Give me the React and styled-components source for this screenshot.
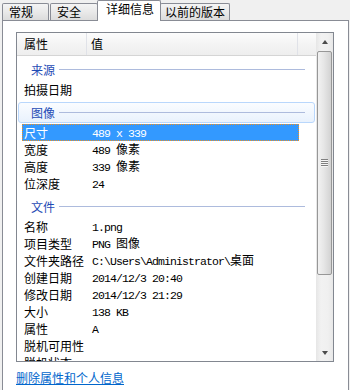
import React from 'react'
import styled, { createGlobalStyle } from 'styled-components'

const GlobalStyle = createGlobalStyle`
  body {
    margin: 0;
    background: #f0f0f0;
    font-family: "Noto Sans CJK SC", "Noto Sans", sans-serif;
    font-size: 12px;
    color: #000;
  }
`

const Window = styled.div`
  width: 350px;
  height: 390px;
  overflow: hidden;
`

const TabStrip = styled.div`
  display: flex;
  align-items: flex-end;
  height: 20px;
  padding-left: 2px;
  position: relative;
  z-index: 1;
`

const Tab = styled.div`
  box-sizing: border-box;
  width: ${p => p.$w}px;
  height: ${p => (p.$active ? 21 : 17)}px;
  margin-left: ${p => p.$ml || 0}px;
  margin-bottom: ${p => (p.$active ? -1 : 0)}px;
  padding-left: ${p => p.$pl || 6}px;
  border: 1px solid #898c95;
  border-bottom: none;
  border-radius: 2px 2px 0 0;
  background: ${p => (p.$active ? '#fff' : 'linear-gradient(#f4f4f4, #e9e9e9 50%, #dcdcdc)')};
  line-height: 16px;
  white-space: nowrap;
  position: relative;
  z-index: ${p => (p.$active ? 2 : 1)};
`

const Panel = styled.div`
  box-sizing: border-box;
  margin-left: 2px;
  width: 347px;
  height: 380px;
  border: 1px solid #898c95;
  border-bottom: none;
  background: #fff;
  padding: 11px 14px 0 13px;
`

const ListBox = styled.div`
  box-sizing: border-box;
  height: 330px;
  border: 1px solid #828790;
  display: flex;
`

const Content = styled.div`
  flex: 1;
  overflow: hidden;
  display: flex;
  flex-direction: column;
`

const Header = styled.div`
  flex: none;
  display: flex;
  height: 22px;
  border-bottom: 1px solid #d5d5d5;
  background: linear-gradient(#fcfcfc, #f4f4f4 50%, #eeeeee);
`

const HeaderCell = styled.div`
  box-sizing: border-box;
  width: ${p => (p.$w ? p.$w + 'px' : 'auto')};
  flex: ${p => (p.$w ? 'none' : '1')};
  padding-left: ${p => p.$pl || 0}px;
  border-right: ${p => (p.$w ? '1px solid #e0e2e8' : 'none')};
  line-height: 22px;
`

const Group = styled.div`
  flex: none;
  padding: ${p => (p.$first ? 3 : 4)}px 1px 1px;
`

const GroupBox = styled.div`
  box-sizing: border-box;
  height: 21px;
  display: flex;
  align-items: center;
  padding: 0 9px 0 12px;
  border: 1px solid ${p => (p.$hot ? '#b9d7fc' : 'transparent')};
  border-radius: 3px;
  background: ${p => (p.$hot ? 'linear-gradient(#fafcff, #e9f2fd)' : 'transparent')};
  color: #1f4bb5;
`

const GroupLine = styled.div`
  flex: 1;
  height: 1px;
  margin-left: 4px;
  background: #adbbdd;
`

const Row = styled.div`
  flex: none;
  box-sizing: border-box;
  display: flex;
  align-items: center;
  width: 277px;
  height: 17px;
  margin-left: 5px;
  padding-left: 1px;
  border: 1px dotted ${p => (p.$selected ? '#f09020' : 'transparent')};
  background: ${p => (p.$selected ? '#3399ff' : 'transparent')};
  color: ${p => (p.$selected ? '#fff' : '#000')};
  white-space: nowrap;
`

const Label = styled.div`
  width: 68px;
  flex: none;
  line-height: 15px;
`

const Value = styled.div`
  line-height: 15px;
`

const Mono = styled.span`
  font-family: "Liberation Mono", monospace;
  font-size: 11.5px;
  letter-spacing: -0.9px;
`

const ScrollBar = styled.div`
  flex: none;
  width: 17px;
  display: flex;
  flex-direction: column;
  background: linear-gradient(to right, #e6e6e6, #f2f2f2 30%, #f0f0f0 70%, #e8e8e8);
`

const ScrollBtn = styled.div`
  height: 17px;
  display: flex;
  align-items: center;
  justify-content: center;
  flex: none;
`

const Arrow = styled.div`
  width: 0;
  height: 0;
  border-left: 3.5px solid transparent;
  border-right: 3.5px solid transparent;
  border-${p => (p.$down ? 'top' : 'bottom')}: 4px solid #4d4d4d;
`

const Thumb = styled.div`
  box-sizing: border-box;
  height: 224px;
  margin: 1px 1px 0 1px;
  border: 1px solid #979797;
  border-radius: 2px;
  background: linear-gradient(to right, #f2f2f2, #e6e6e6 45%, #d2d2d2);
  display: flex;
  align-items: center;
  justify-content: center;
`

const Grip = styled.div`
  width: 7px;
  height: 8px;
  background: repeating-linear-gradient(#808080 0 1px, #f6f6f6 1px 2px);
`

const Track = styled.div`
  flex: 1;
`

const Link = styled.a`
  display: inline-block;
  margin-top: 8px;
  color: #0066cc;
  text-decoration: underline;
  line-height: 16px;
  cursor: pointer;
`

const groups = [
  { title: '来源', rows: [['拍摄日期', '']] },
  {
    title: '图像',
    hot: true,
    rows: [
      ['尺寸', '489 x 339', true],
      ['宽度', '489 像素'],
      ['高度', '339 像素'],
      ['位深度', '24'],
    ],
  },
  {
    title: '文件',
    rows: [
      ['名称', '1.png'],
      ['项目类型', 'PNG 图像'],
      ['文件夹路径', 'C:\\Users\\Administrator\\桌面'],
      ['创建日期', '2014/12/3 20:40'],
      ['修改日期', '2014/12/3 21:29'],
      ['大小', '138 KB'],
      ['属性', 'A'],
      ['脱机可用性', ''],
      ['脱机状态', ''],
    ],
  },
]

// ascii parts use a narrow mono face, chinese parts stay in the sans face
const renderValue = text =>
  text
    .split(/([\x00-\x7f]+)/)
    .filter(Boolean)
    .map((s, i) =>
      /^[\x00-\x7f]+$/.test(s) ? <Mono key={i}>{s}</Mono> : <span key={i}>{s}</span>
    )

export default function App() {
  return (
    <Window>
      <GlobalStyle />
      <TabStrip>
        <Tab $w={47}>常规</Tab>
        <Tab $w={48} $ml={1}>安全</Tab>
        <Tab $w={64} $ml={-1} $pl={8} $active>详细信息</Tab>
        <Tab $w={70} $ml={-1} $pl={4}>以前的版本</Tab>
      </TabStrip>
      <Panel>
        <ListBox>
          <Content>
            <Header>
              <HeaderCell $w={70} $pl={7}>属性</HeaderCell>
              <HeaderCell $w={211} $pl={4}>值</HeaderCell>
              <HeaderCell />
            </Header>
            {groups.map((g, gi) => (
              <React.Fragment key={g.title}>
                <Group $first={gi === 0}>
                  <GroupBox $hot={g.hot}>
                    {g.title}
                    <GroupLine />
                  </GroupBox>
                </Group>
                {g.rows.map(([label, value, selected]) => (
                  <Row key={label} $selected={selected}>
                    <Label>{label}</Label>
                    <Value>{renderValue(value)}</Value>
                  </Row>
                ))}
              </React.Fragment>
            ))}
          </Content>
          <ScrollBar>
            <ScrollBtn>
              <Arrow />
            </ScrollBtn>
            <Thumb>
              <Grip />
            </Thumb>
            <Track />
            <ScrollBtn>
              <Arrow $down />
            </ScrollBtn>
          </ScrollBar>
        </ListBox>
        <Link>删除属性和个人信息</Link>
      </Panel>
    </Window>
  )
}
